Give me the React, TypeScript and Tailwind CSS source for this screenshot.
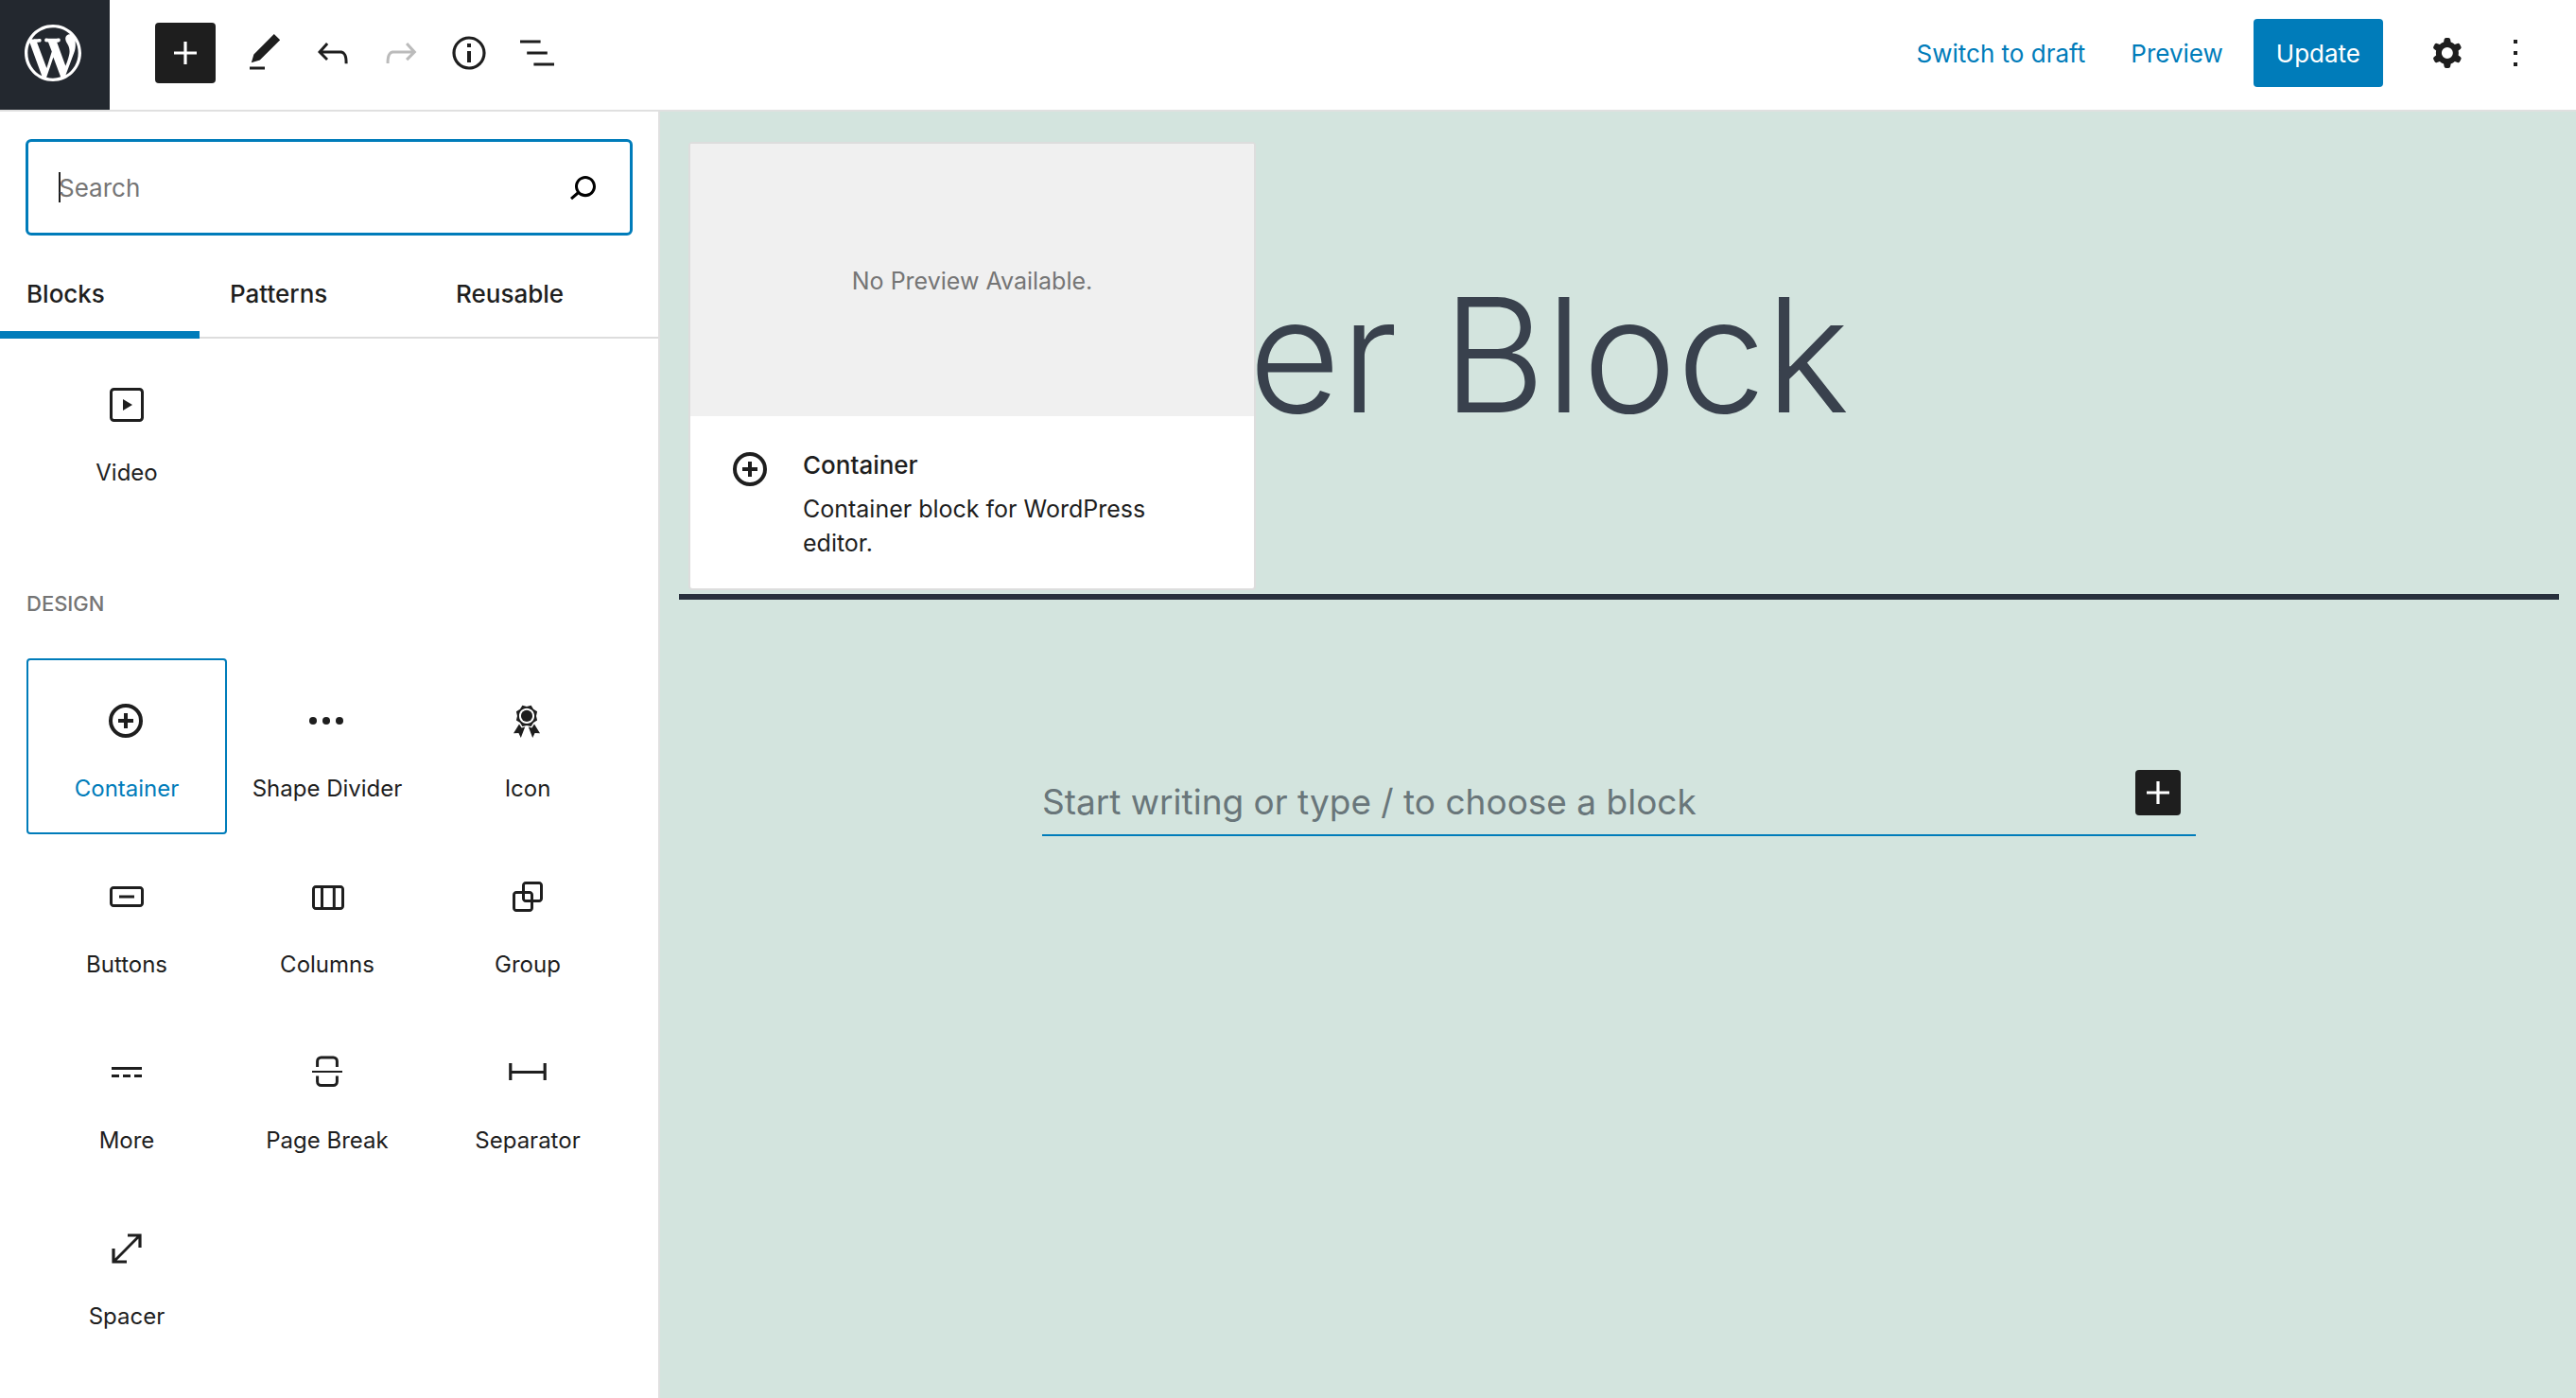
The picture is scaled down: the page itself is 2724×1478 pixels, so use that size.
import React from "react";

type IconProps = { children: React.ReactNode; className?: string; viewBox?: string };

function Icon({ children, className = "size-12", viewBox = "0 0 24 24" }: IconProps) {
  return (
    <svg viewBox={viewBox} className={className} fill="currentColor" aria-hidden="true">
      {children}
    </svg>
  );
}

const plus = <path d="M18 11.2h-5.2V6h-1.6v5.2H6v1.6h5.2V18h1.6v-5.2H18z" />;

const container = (
  <>
    <circle cx="11.5" cy="12" r="8" fill="none" stroke="currentColor" strokeWidth="2" />
    <path d="M10.5 8h2v3h3v2h-3v3h-2v-3h-3v-2h3z" />
  </>
);

const blocks: { name: string; active?: boolean; icon: React.ReactNode }[] = [
  { name: "Container", active: true, icon: container },
  {
    name: "Shape Divider",
    icon: (
      <>
        <circle cx="4.5" cy="12" r="2" />
        <circle cx="11.5" cy="12" r="2" />
        <circle cx="18.5" cy="12" r="2" />
      </>
    ),
  },
  {
    name: "Icon",
    icon: (
      <g transform="translate(1.5 2)">
        <path
          fillRule="evenodd"
          d="M4.46 5.16L5 7.46l-.54 2.29 2.01 1.24L7.7 13l2.3-.54 2.3.54 1.23-2.01 2.01-1.24L15 7.46l.54-2.3-2-1.24-1.24-2.01-2.3.55-2.29-.54-1.25 2zm5.55 6.34c-2.24 0-4.05-1.81-4.05-4.04s1.81-4.04 4.05-4.04 4.04 1.81 4.04 4.04-1.81 4.04-4.04 4.04z"
        />
        <circle cx="10" cy="7.46" r="3.04" />
        <path d="M6 11.7l1.3 2 1.8-.4L6.9 19l-1.2-2.5-2.7.1zM14 11.7l-1.3 2-1.8-.4 2.2 5.7 1.2-2.5 2.7.1z" />
      </g>
    ),
  },
  {
    name: "Buttons",
    icon: (
      <path d="M19 6.5H5c-1.1 0-2 .9-2 2v7c0 1.1.9 2 2 2h14c1.1 0 2-.9 2-2v-7c0-1.1-.9-2-2-2zm.5 9c0 .3-.2.5-.5.5H5c-.3 0-.5-.2-.5-.5v-7c0-.3.2-.5.5-.5h14c.3 0 .5.2.5.5v7zM8 12.8h8v-1.5H8v1.5z" />
    ),
  },
  {
    name: "Columns",
    icon: (
      <path d="M19 6H6c-1.1 0-2 .9-2 2v9c0 1.1.9 2 2 2h13c1.1 0 2-.9 2-2V8c0-1.1-.9-2-2-2zm-4.1 1.5v10H10v-10h4.9zM5.5 17V8c0-.3.2-.5.5-.5h2.5v10H6c-.3 0-.5-.2-.5-.5zm14 0c0 .3-.2.5-.5.5h-2.6v-10H19c.3 0 .5.2.5.5v9z" />
    ),
  },
  {
    name: "Group",
    icon: (
      <path d="M18 4h-7c-1.1 0-2 .9-2 2v3H6c-1.1 0-2 .9-2 2v7c0 1.1.9 2 2 2h7c1.1 0 2-.9 2-2v-3h3c1.1 0 2-.9 2-2V6c0-1.1-.9-2-2-2zm-4.5 14c0 .3-.2.5-.5.5H6c-.3 0-.5-.2-.5-.5v-7c0-.3.2-.5.5-.5h3V13c0 1.1.9 2 2 2h2.5v3zm0-4.5H11c-.3 0-.5-.2-.5-.5v-2.5H13c.3 0 .5.2.5.5v2.5zm5-.5c0 .3-.2.5-.5.5h-3V11c0-1.1-.9-2-2-2h-2.5V6c0-.3.2-.5.5-.5h7c.3 0 .5.2.5.5v7z" />
    ),
  },
  {
    name: "More",
    icon: (
      <path d="M4 9v1.5h16V9H4zm12 5.5h4V13h-4v1.5zm-6 0h4V13h-4v1.5zm-6 0h4V13H4v1.5z" />
    ),
  },
  {
    name: "Page Break",
    icon: (
      <>
        <path
          fill="none"
          stroke="currentColor"
          strokeWidth="1.5"
          d="M6.8 9V6a2 2 0 0 1 2-2h6.4a2 2 0 0 1 2 2v3M6.8 13.8v3a2 2 0 0 0 2 2h6.4a2 2 0 0 0 2-2v-3"
        />
        <path d="M4 11h16v1H4z" />
      </>
    ),
  },
  {
    name: "Separator",
    icon: <path d="M2.1 7h1.6v4h16.6V7h1.6v9h-1.6v-3.5H3.7V16H2.1z" />,
  },
  {
    name: "Spacer",
    icon: (
      <path d="M12.5 4.2v1.6h4.7L5.8 17.2V12H4.2v7.8H12v-1.6H6.8L18.2 6.8v4.7h1.6V4.2z" />
    ),
  },
];

function BlockTile({ name, icon, active }: { name: string; icon: React.ReactNode; active?: boolean }) {
  return (
    <button
      type="button"
      className={
        active
          ? "flex h-[186px] flex-col items-center gap-8 rounded border-2 border-[#007cba] pt-10 text-2xl text-[#007cba]"
          : "flex h-[186px] flex-col items-center gap-8 rounded border-2 border-transparent pt-10 text-2xl"
      }
    >
      <Icon className="size-12 text-[#1e1e1e]">{icon}</Icon>
      {name}
    </button>
  );
}

function ToolButton({ label, disabled, children }: { label: string; disabled?: boolean; children: React.ReactNode }) {
  return (
    <button
      type="button"
      aria-label={label}
      disabled={disabled}
      className="flex size-[72px] items-center justify-center disabled:text-[#bbbbbb]"
    >
      <Icon>{children}</Icon>
    </button>
  );
}

function Header() {
  return (
    <header className="flex h-[118px] shrink-0 border-b-2 border-[#e0e0e0] bg-white">
      <a
        href="#posts"
        aria-label="View posts"
        className="flex w-[116px] items-center bg-[#23282f] pb-1 pl-[26px] text-white"
      >
        <Icon className="size-[60px]" viewBox="0 0 20 20">
          <path d="M20 10c0-5.51-4.49-10-10-10C4.48 0 0 4.49 0 10c0 5.52 4.48 10 10 10 5.51 0 10-4.48 10-10zM7.78 15.37L4.37 6.22c.55-.02 1.17-.08 1.17-.08.5-.06.44-1.13-.06-1.11 0 0-1.45.11-2.37.11-.18 0-.37 0-.58-.01C4.12 2.69 6.87 1.11 10 1.11c2.33 0 4.45.87 6.05 2.34-.68-.11-1.65.39-1.65 1.58 0 .74.45 1.36.9 2.1.35.61.55 1.36.55 2.46 0 1.49-1.4 5-1.4 5l-3.03-8.37c.54-.02.82-.17.82-.17.5-.05.44-1.25-.06-1.22 0 0-1.44.12-2.38.12-.87 0-2.33-.12-2.33-.12-.5-.03-.56 1.2-.06 1.22l.92.08 1.26 3.41zM17.41 10c.24-.64.74-1.87.43-4.25.7 1.29 1.05 2.71 1.05 4.25 0 3.29-1.73 6.24-4.4 7.78.97-2.59 1.94-5.2 2.92-7.78zM6.1 18.09C3.12 16.65 1.11 13.53 1.11 10c0-1.3.23-2.48.72-3.59C3.25 10.3 4.67 14.2 6.1 18.09zm4.03-6.63l2.58 6.98c-.86.29-1.76.45-2.71.45-.79 0-1.57-.11-2.29-.33.81-2.38 1.62-4.74 2.42-7.1z" />
        </Icon>
      </a>
      <div className="flex flex-1 items-center justify-between pr-7 pb-1 pl-12">
        <div className="flex items-center">
          <button
            type="button"
            aria-label="Add block"
            className="mr-4 flex size-16 items-center justify-center rounded bg-[#1e1e1e] text-white"
          >
            <Icon>{plus}</Icon>
          </button>
          <ToolButton label="Tools">
            <path d="M20.1 5.1L16.9 2 6.2 12.7l-1.3 4.4 4.5-1.3L20.1 5.1zM4 20.8h8v-1.5H4v1.5z" />
          </ToolButton>
          <ToolButton label="Undo">
            <path d="M18.3 11.7c-.6-.6-1.4-.9-2.3-.9H6.7l2.9-3.3-1.1-1-4.5 5L8.5 16l1-1-2.7-2.7H16c.5 0 .9.2 1.3.5 1 1 1 3.4 1 4.5v.3h1.5v-.2c0-1.5 0-4.3-1.5-5.7z" />
          </ToolButton>
          <ToolButton label="Redo" disabled>
            <path d="M15.6 6.5l-1.1 1 2.9 3.3H8c-.9 0-1.7.3-2.3.9-1.4 1.5-1.4 4.2-1.4 5.6v.2h1.5v-.3c0-1.1 0-3.5 1-4.5.3-.3.7-.5 1.3-.5h9.2L14.5 15l1.1 1.1 4.6-4.6-4.6-5z" />
          </ToolButton>
          <ToolButton label="Details">
            <path d="M12 3.2c-4.8 0-8.8 3.9-8.8 8.8 0 4.8 3.9 8.8 8.8 8.8 4.8 0 8.8-3.9 8.8-8.8 0-4.8-4-8.8-8.8-8.8zm0 16c-4 0-7.2-3.3-7.2-7.2C4.8 8 8 4.8 12 4.8s7.2 3.3 7.2 7.2c0 4-3.2 7.2-7.2 7.2zM11 17h2v-6h-2v6zm0-8h2V7h-2v2z" />
          </ToolButton>
          <ToolButton label="List view">
            <path d="M13.8 5.2H3v1.5h10.8V5.2zm-3.6 12v1.5H21v-1.5H10.2zm7.2-6H6.6v1.5h10.8v-1.5z" />
          </ToolButton>
        </div>
        <div className="flex items-center text-[26px]">
          <button type="button" className="mr-12 text-[#007cba]">
            Switch to draft
          </button>
          <button type="button" className="mr-8 text-[#007cba]">
            Preview
          </button>
          <button type="button" className="mr-8 h-[72px] rounded bg-[#007cba] px-6 text-white">
            Update
          </button>
          <ToolButton label="Settings">
            <path
              fillRule="evenodd"
              d="M10.289 4.836A1 1 0 0111.275 4h1.306a1 1 0 01.987.836l.244 1.466c.787.26 1.503.679 2.108 1.218l1.393-.522a1 1 0 011.216.437l.653 1.13a1 1 0 01-.23 1.273l-1.148.944a6.025 6.025 0 010 2.435l1.149.946a1 1 0 01.23 1.272l-.653 1.13a1 1 0 01-1.216.437l-1.394-.522c-.605.54-1.32.958-2.108 1.218l-.244 1.466a1 1 0 01-.987.836h-1.306a1 1 0 01-.986-.836l-.244-1.466a5.995 5.995 0 01-2.108-1.218l-1.394.522a1 1 0 01-1.217-.436l-.653-1.131a1 1 0 01.23-1.272l1.149-.946a6.026 6.026 0 010-2.435l-1.148-.944a1 1 0 01-.23-1.272l.653-1.131a1 1 0 011.217-.437l1.393.522a5.994 5.994 0 012.108-1.218l.244-1.466zM14.929 12a3 3 0 11-6 0 3 3 0 016 0z"
            />
          </ToolButton>
          <ToolButton label="Options">
            <path d="M13 19h-2v-2h2v2zm0-6h-2v-2h2v2zm0-6h-2V5h2v2z" />
          </ToolButton>
        </div>
      </div>
    </header>
  );
}

function Inserter() {
  return (
    <aside className="w-[698px] shrink-0 border-r-2 border-[#e0e0e0] bg-white">
      <div className="mx-[27px] mt-[29px] flex h-[102px] items-center rounded-md border-3 border-[#007cba] pr-[26px] pl-8">
        <span className="-mr-0.5 h-8 w-0.5 bg-[#1e1e1e]" />
        <input
          type="search"
          aria-label="Search for blocks and patterns"
          placeholder="Search"
          className="min-w-0 flex-1 text-[26px] outline-none placeholder:text-[#757575]"
        />
        <button type="button" aria-label="Search" className="text-black">
          <Icon>
            <path d="M13.5 6C10.5 6 8 8.5 8 11.5c0 1.1.3 2.1.9 3l-3.4 3 1 1.1 3.4-2.9c1 .9 2.2 1.4 3.6 1.4 3 0 5.5-2.5 5.5-5.5C19 8.5 16.5 6 13.5 6zm0 9.5c-2.2 0-4-1.8-4-4s1.8-4 4-4 4 1.8 4 4-1.8 4-4 4z" />
          </Icon>
        </button>
      </div>
      <div role="tablist" className="mt-[13px] flex h-24 text-left text-[26px] font-medium">
        <button
          type="button"
          role="tab"
          aria-selected="true"
          className="w-[211px] border-b-8 border-[#007cba] pt-2 pl-7 text-left"
        >
          Blocks
        </button>
        <button type="button" role="tab" className="w-[239px] border-b-2 border-[#dddddd] pt-0.5 pl-8 text-left">
          Patterns
        </button>
        <button type="button" role="tab" className="flex-1 border-b-2 border-[#dddddd] pt-0.5 pl-8 text-left">
          Reusable
        </button>
      </div>
      <div className="mt-1 mr-8 ml-7 grid grid-cols-3">
        <BlockTile
          name="Video"
          icon={
            <path d="M18.7 3H5.3C4 3 3 4 3 5.3v13.4C3 20 4 21 5.3 21h13.4c1.3 0 2.3-1 2.3-2.3V5.3C21 4 20 3 18.7 3zm.8 15.7c0 .4-.4.8-.8.8H5.3c-.4 0-.8-.4-.8-.8V5.3c0-.4.4-.8.8-.8h13.4c.4 0 .8.4.8.8v13.4zM10 15l5-3-5-3v6z" />
          }
        />
      </div>
      <h2 className="mt-[74px] ml-7 text-[22px] leading-8 font-medium text-[#757575] uppercase">Design</h2>
      <div className="mt-[42px] mr-8 ml-7 grid grid-cols-3">
        {blocks.map((block) => (
          <BlockTile key={block.name} {...block} />
        ))}
      </div>
    </aside>
  );
}

function PreviewCard() {
  return (
    <div className="absolute top-8 left-[30px] w-[600px] overflow-hidden rounded border-2 border-[#dddddd] bg-white text-[25px] leading-9">
      <div className="flex h-72 items-center justify-center bg-[#f0f0f0] pt-0.5 text-[#757575]">
        No Preview Available.
      </div>
      <div className="flex gap-[31px] px-10 pt-8 pb-[30px]">
        <Icon className="size-12 shrink-0">{container}</Icon>
        <div className="pt-0.5">
          <h2 className="text-[26px] font-medium">Container</h2>
          <p className="mt-2.5">Container block for WordPress editor.</p>
        </div>
      </div>
    </div>
  );
}

function Canvas() {
  return (
    <main className="relative min-w-0 flex-1 bg-[#d3e4de]">
      <div className="mr-[18px] ml-5 h-[516px] border-b-6 border-[#28303d] pt-[142px]">
        <h1 className="text-[168px] leading-[230px] font-light whitespace-nowrap text-[#39414d]">Container Block</h1>
      </div>
      <div className="mt-[180px] mr-[402px] ml-[404px] flex h-[70px] justify-between border-b-2 border-[#007cba] pr-4">
        <input
          aria-label="Add block text"
          placeholder="Start writing or type / to choose a block"
          className="min-w-0 flex-1 text-[37px] outline-none placeholder:text-[#69767a]"
        />
        <button
          type="button"
          aria-label="Add block"
          className="flex size-12 items-center justify-center rounded bg-[#1e1e1e] text-white"
        >
          <Icon>{plus}</Icon>
        </button>
      </div>
      <PreviewCard />
    </main>
  );
}

export default function App() {
  return (
    <div className="flex h-screen flex-col overflow-hidden bg-white font-['Inter',sans-serif] text-[#1e1e1e]">
      <Header />
      <div className="flex min-h-0 flex-1">
        <Inserter />
        <Canvas />
      </div>
    </div>
  );
}
